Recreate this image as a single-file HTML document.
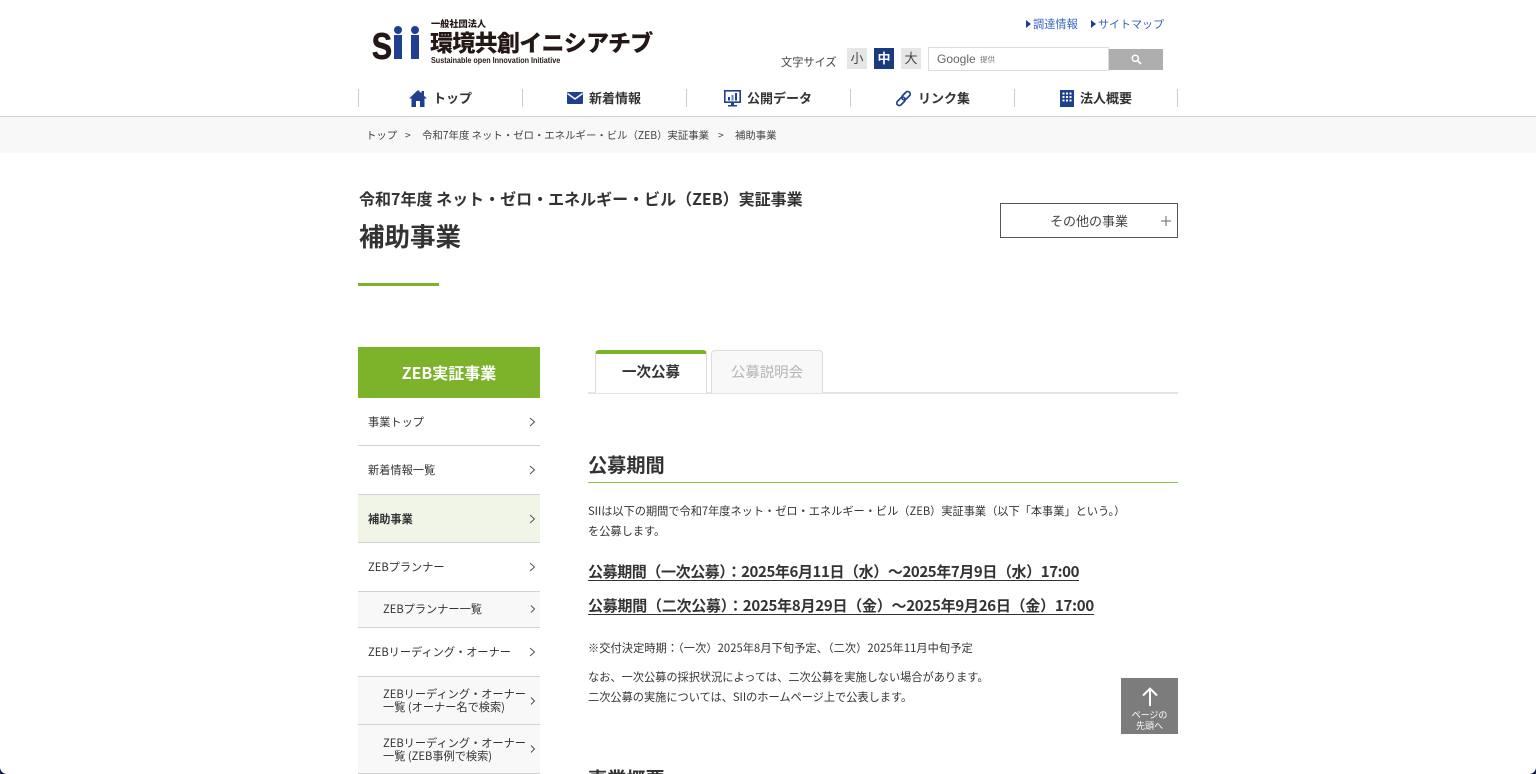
<!DOCTYPE html>
<html lang="ja"><head><meta charset="utf-8"><title>補助事業</title>
<style>
html,body{margin:0;padding:0;width:1536px;height:774px;overflow:hidden;background:#fff}
body{position:relative;font-family:"Noto Sans CJK JP","Liberation Sans",sans-serif;color:#333}
.t,.b{position:absolute;white-space:nowrap}
.t{line-height:1}
.b{box-sizing:border-box}
svg{position:absolute;overflow:visible}
.nav{font-size:13px;font-weight:700;color:#333;top:91px}
.sep{position:absolute;top:89px;width:1px;height:18px;background:#ccc}
.side{font-size:11.2px;color:#333}
.hr{position:absolute;left:358px;width:182px;height:1px;background:#d2d2d2}
.p{font-size:11.2px;color:#333}
.u{font-size:15px;font-weight:700;color:#333;text-decoration:underline;text-underline-offset:3px}
.bc{font-size:10.4px;color:#444;top:130px}
</style></head><body>

<!-- logo -->
<div class="t" style="left:371px;top:17px;font-size:49px;font-weight:700;color:#231815;letter-spacing:-1px;line-height:52px;font-family:'Liberation Sans',sans-serif;transform:scaleX(.8);transform-origin:left top;width:26px;overflow:hidden;height:52px">s</div>
<div class="b" style="left:394px;top:35px;width:8px;height:24px;background:#1f3f8f"></div>
<div class="b" style="left:394px;top:26px;width:8px;height:8px;border-radius:50%;background:#1f3f8f"></div>
<div class="b" style="left:411px;top:35px;width:8px;height:24px;background:#1f3f8f"></div>
<div class="b" style="left:411px;top:26px;width:8px;height:8px;border-radius:50%;background:#1f3f8f"></div>
<div class="t" style="left:431px;top:19px;font-size:9.200px;font-weight:900;color:#231815">一般社団法人</div>
<div class="t" style="left:430px;top:30px;font-size:23px;font-weight:900;color:#231815;letter-spacing:-.7px">環境共創イニシアチブ</div>
<div class="t" style="left:431px;top:57px;font-size:8px;font-weight:700;color:#231815;font-family:'Liberation Sans',sans-serif;transform:scaleX(.9);transform-origin:left">Sustainable open Innovation Initiative</div>

<!-- top links -->
<svg style="left:1026px;top:20px" width="6" height="8"><path d="M0 0L5 4L0 8Z" fill="#1f3f8f"/></svg>
<div class="t" style="left:1033px;top:19px;font-size:11.2px;color:#3a62c4">調達情報</div>
<svg style="left:1091px;top:20px" width="6" height="8"><path d="M0 0L5 4L0 8Z" fill="#1f3f8f"/></svg>
<div class="t" style="left:1098px;top:19px;font-size:11px;color:#3a62c4">サイトマップ</div>

<!-- size -->
<div class="t" style="left:781px;top:57px;font-size:11.2px;color:#444">文字サイズ</div>
<div class="b" style="left:847px;top:48px;width:20px;height:21px;background:#e6e6e6;color:#444;font-size:13px;text-align:center;line-height:20px">小</div>
<div class="b" style="left:874px;top:48px;width:20px;height:21px;background:#1a3a80;color:#fff;font-size:13px;font-weight:700;text-align:center;line-height:20px">中</div>
<div class="b" style="left:901px;top:48px;width:20px;height:21px;background:#e6e6e6;color:#444;font-size:13px;text-align:center;line-height:20px">大</div>

<!-- search -->
<div class="b" style="left:928px;top:47px;width:181px;height:24px;border:1px solid #ddd;background:#fff"></div>
<div class="t" style="left:937px;top:53px;font-size:12px;color:#666;font-family:'Liberation Sans',sans-serif">Google</div>
<div class="t" style="left:980px;top:56px;font-size:7.500px;color:#777">提供</div>
<div class="b" style="left:1109px;top:49px;width:54px;height:21px;background:#aeaeae"></div>
<svg style="left:1131px;top:54px" width="11" height="11" viewBox="0 0 11 11"><circle cx="4.3" cy="4.3" r="3.1" fill="none" stroke="#fff" stroke-width="1.5"/><path d="M6.6 6.6L10 10" stroke="#fff" stroke-width="1.8"/></svg>

<!-- nav -->
<div class="sep" style="left:358px"></div><div class="sep" style="left:522px"></div><div class="sep" style="left:686px"></div><div class="sep" style="left:850px"></div><div class="sep" style="left:1014px"></div><div class="sep" style="left:1177px"></div>

<svg style="left:409px;top:90px" width="18" height="17" viewBox="0 0 18 17"><path d="M9 0L0 8.5H2.5V17H7V11H11V17H15.500V8.500H18L15 5.700V1H12.500V3.300Z" fill="#1f3f8f"/></svg>
<div class="t nav" style="left:433px">トップ</div>

<svg style="left:567px;top:92px" width="16" height="12" viewBox="0 0 16 12"><rect width="16" height="12" rx="1" fill="#1f3f8f"/><path d="M0.500 1.500L8 7L15.500 1.500" fill="none" stroke="#fff" stroke-width="1.400"/></svg>
<div class="t nav" style="left:589px">新着情報</div>

<svg style="left:724px;top:90px" width="17" height="17" viewBox="0 0 17 17"><rect x=".8" y=".8" width="15.400" height="11.400" fill="#fff" stroke="#1f3f8f" stroke-width="1.600"/><rect x="4" y="7" width="2" height="3.500" fill="#1f3f8f"/><rect x="7.500" y="5" width="2" height="5.500" fill="#5b7fc4"/><rect x="11" y="3" width="2" height="7.500" fill="#1f3f8f"/><path d="M7 13V15H4V16.500H13V15H10V13Z" fill="#1f3f8f"/></svg>
<div class="t nav" style="left:747px">公開データ</div>

<svg style="left:895px;top:90px" width="17" height="17" viewBox="0 0 17 17"><g fill="none" stroke="#1f3f8f" stroke-width="1.700"><rect x="8.500" y="0.800" width="5" height="9.800" rx="2.500" transform="rotate(45 11 5.700)"/><rect x="3.500" y="6.400" width="5" height="9.800" rx="2.500" transform="rotate(45 6 11.300)"/></g></svg>
<div class="t nav" style="left:918px">リンク集</div>

<svg style="left:1060px;top:90px" width="14" height="17" viewBox="0 0 14 17"><rect width="14" height="17" fill="#1f3f8f"/><path d="M2.500 2.500h2v2h-2zM6 2.500h2v2H6zM9.500 2.500h2v2h-2zM2.500 6h2v2h-2zM6 6h2v2H6zM9.500 6h2v2h-2zM2.500 9.500h2v2h-2zM6 9.500h2v2H6zM9.500 9.500h2v2h-2z" fill="#fff"/></svg>
<div class="t nav" style="left:1080px">法人概要</div>

<!-- breadcrumb -->
<div class="b" style="left:0;top:116px;width:1536px;height:37px;background:#f8f8f8;border-top:1px solid #ccc"></div>
<div class="t bc" style="left:366px">トップ</div>
<div class="t bc" style="left:405px">&gt;</div>
<div class="t bc" style="left:422px">令和7年度 ネット・ゼロ・エネルギー・ビル（ZEB）実証事業</div>
<div class="t bc" style="left:718px">&gt;</div>
<div class="t bc" style="left:735px">補助事業</div>

<!-- title -->
<div class="t" style="left:359px;top:190px;font-size:16px;font-weight:700;color:#333">令和7年度 ネット・ゼロ・エネルギー・ビル（ZEB）実証事業</div>
<div class="t" style="left:359px;top:223px;font-size:25.500px;font-weight:700;color:#333">補助事業</div>
<div class="b" style="left:358px;top:283px;width:80.500px;height:3px;background:#7db32a"></div>

<div class="b" style="left:1000px;top:203px;width:178px;height:35px;border:1px solid #555;background:#fff"></div>
<div class="t" style="left:1050px;top:214px;font-size:13px;color:#444">その他の事業</div>
<svg style="left:1161px;top:216px" width="10" height="10"><path d="M5 0V10M0 5H10" stroke="#666" stroke-width="1"/></svg>

<!-- sidebar -->
<div class="b" style="left:358px;top:347px;width:182px;height:51px;background:#7db32a;color:#fff;font-size:16px;font-weight:700;text-align:center;line-height:50px">ZEB実証事業</div>

<div class="t side" style="left:368px;top:417px">事業トップ</div>
<div class="hr" style="top:445px"></div>
<div class="t side" style="left:368px;top:465px">新着情報一覧</div>
<div class="b" style="left:358px;top:494px;width:182px;height:49px;background:#f1f5e8;border-top:1px solid #d2d2d2;border-bottom:1px solid #d2d2d2"></div>
<div class="t side" style="left:368px;top:514px;font-weight:700">補助事業</div>
<div class="t side" style="left:368px;top:562px">ZEBプランナー</div>
<div class="b" style="left:358px;top:591px;width:182px;height:37px;background:#f8f8f8;border-top:1px solid #d2d2d2;border-bottom:1px solid #d2d2d2"></div>
<div class="t side" style="left:383px;top:604px">ZEBプランナー一覧</div>
<div class="t side" style="left:368px;top:647px">ZEBリーディング・オーナー</div>
<div class="b" style="left:358px;top:676px;width:182px;height:49px;background:#f8f8f8;border-top:1px solid #d2d2d2;border-bottom:1px solid #d2d2d2"></div>
<div class="t side" style="left:383px;top:689px">ZEBリーディング・オーナー</div>
<div class="t side" style="left:383px;top:702px">一覧 (オーナー名で検索)</div>
<div class="b" style="left:358px;top:725px;width:182px;height:49px;background:#f8f8f8;border-bottom:1px solid #d2d2d2"></div>
<div class="t side" style="left:383px;top:738px">ZEBリーディング・オーナー</div>
<div class="t side" style="left:383px;top:751px">一覧 (ZEB事例で検索)</div>

<svg style="left:529px;top:417px" width="7" height="10"><path d="M1 1L5.500 5L1 9" fill="none" stroke="#555"/></svg>
<svg style="left:529px;top:465px" width="7" height="10"><path d="M1 1L5.500 5L1 9" fill="none" stroke="#555"/></svg>
<svg style="left:529px;top:514px" width="7" height="10"><path d="M1 1L5.500 5L1 9" fill="none" stroke="#555"/></svg>
<svg style="left:529px;top:562px" width="7" height="10"><path d="M1 1L5.500 5L1 9" fill="none" stroke="#555"/></svg>
<svg style="left:530px;top:605px" width="6" height="8"><path d="M1 .5L4.500 4L1 7.500" fill="none" stroke="#555"/></svg>
<svg style="left:529px;top:647px" width="7" height="10"><path d="M1 1L5.500 5L1 9" fill="none" stroke="#555"/></svg>
<svg style="left:530px;top:697px" width="6" height="8"><path d="M1 .5L4.500 4L1 7.500" fill="none" stroke="#555"/></svg>
<svg style="left:530px;top:745px" width="6" height="8"><path d="M1 .5L4.500 4L1 7.500" fill="none" stroke="#555"/></svg>

<!-- tabs -->
<div class="b" style="left:588px;top:392px;width:590px;height:2px;background:#e4e4e4"></div>
<div class="b" style="left:595px;top:350px;width:112px;height:43px;background:#fff;border:1px solid #ddd;border-top:4px solid #7db32a;border-bottom:0;border-radius:4px 4px 0 0"></div>
<div class="t" style="left:622px;top:365px;font-size:14.500px;font-weight:700;color:#333">一次公募</div>
<div class="b" style="left:711px;top:350px;width:112px;height:43px;background:#f8f8f8;border:1px solid #ddd;border-bottom:0;border-radius:4px 4px 0 0"></div>
<div class="t" style="left:731px;top:365px;font-size:14.400px;color:#b4b4b4">公募説明会</div>

<!-- content -->
<div class="t" style="left:588px;top:455px;font-size:19.200px;font-weight:700;color:#333">公募期間</div>
<div class="b" style="left:588px;top:482px;width:590px;height:1px;background:#8cc04a"></div>

<div class="t p" style="left:588px;top:506px">SIIは以下の期間で令和7年度ネット・ゼロ・エネルギー・ビル（ZEB）実証事業（以下「本事業」という。）</div>
<div class="t p" style="left:588px;top:526px">を公募します。</div>

<div class="t u" style="left:588px;top:564px;letter-spacing:-.4px">公募期間（一次公募）：2025年6月11日（水）〜2025年7月9日（水）17:00</div>
<div class="t u" style="left:588px;top:598px;letter-spacing:-.25px">公募期間（二次公募）：2025年8月29日（金）〜2025年9月26日（金）17:00</div>

<div class="t p" style="left:588px;top:643px;letter-spacing:.08px">※交付決定時期：（一次）2025年8月下旬予定、（二次）2025年11月中旬予定</div>
<div class="t p" style="left:588px;top:672px">なお、一次公募の採択状況によっては、二次公募を実施しない場合があります。</div>
<div class="t p" style="left:588px;top:692px">二次公募の実施については、SIIのホームページ上で公表します。</div>

<div class="t" style="left:588px;top:769px;font-size:19.200px;font-weight:700;color:#333">事業概要</div>

<!-- to top -->
<div class="b" style="left:1121px;top:678px;width:57px;height:56px;background:#7c7c7c"></div>
<svg style="left:1142px;top:687px" width="16" height="19" viewBox="0 0 16 19"><path d="M8 19V1.500M1 8.500L8 1.500L15 8.500" fill="none" stroke="#fff" stroke-width="2"/></svg>
<div class="t" style="left:1121px;top:709px;width:57px;text-align:center;font-size:9px;line-height:11px;color:#fff">ページの<br>先頭へ</div>

<!-- corners -->
<svg style="left:0;top:767px" width="7" height="7"><path d="M0 0V7H7A7 7 0 0 1 0 0Z" fill="#1a1a5e"/></svg>
<svg style="left:1529px;top:767px" width="7" height="7"><path d="M7 0V7H0A7 7 0 0 0 7 0Z" fill="#1a1a5e"/></svg>

</body></html>
